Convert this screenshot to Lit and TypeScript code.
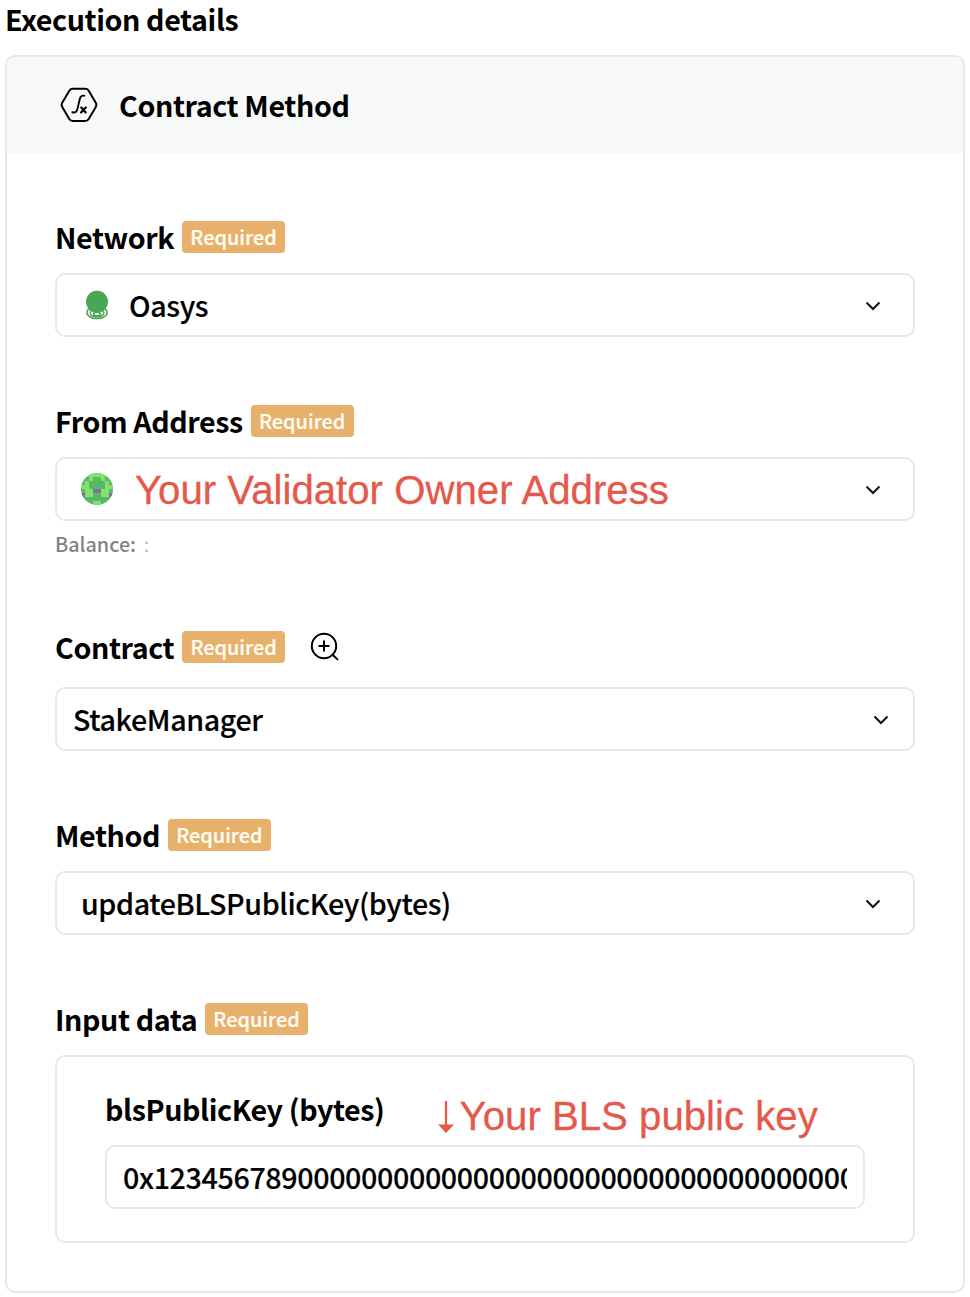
import { LitElement, html, css, svg, nothing } from "lit";
import { customElement, property } from "lit/decorators.js";

const AVATAR = [
  "..LLLL..",
  "..L..L..",
  ".L....L.",
  "LL....LL",
  ".LLPPLL.",
  "PLL..LLP",
  "........",
  "...LL...",
];

@customElement("required-badge")
class RequiredBadge extends LitElement {
  static styles = css`
    :host {
      display: block;
      box-sizing: border-box;
      width: 103px;
      height: 32px;
      border-radius: 4px;
      background: #e8b16b;
      color: #fffdf4;
      font-size: 19.9px;
      font-weight: 500;
      letter-spacing: 0;
      line-height: 31px;
      text-align: center;
      white-space: nowrap;
      -webkit-text-stroke: 0.2px #fffdf4;
    }
  `;
  render() {
    return html`Required`;
  }
}

@customElement("select-box")
class SelectBox extends LitElement {
  @property({ type: Boolean }) compact = false;
  static styles = css`
    :host {
      display: block;
    }
    .box {
      box-sizing: border-box;
      height: 64px;
      border: 2px solid #e8e8ea;
      border-radius: 10px;
      background: #fff;
      display: flex;
      align-items: center;
      justify-content: space-between;
      padding: 0 32px 0 24px;
    }
    .box.compact {
      padding: 0 24px 0 16px;
    }
    .value {
      display: flex;
      align-items: center;
      font-weight: 500;
      letter-spacing: -0.39px;
      white-space: nowrap;
      -webkit-text-stroke: 0.15px currentColor;
    }
    .chevron {
      display: block;
      margin-top: 2px;
    }
  `;
  render() {
    return html`<div class="box ${this.compact ? "compact" : ""}">
      <div class="value"><slot></slot></div>
      <svg class="chevron" width="16" height="10" viewBox="0 0 16 10" fill="none" stroke="#111" stroke-width="2">
        <path d="M1.5 1.5 8 8l6.5-6.5" />
      </svg>
    </div>`;
  }
}

@customElement("app-root")
class AppRoot extends LitElement {
  static styles = css`
    :host {
      display: block;
      box-sizing: border-box;
      height: 1297px;
      padding: 0 5px;
      background: #fff;
      color: #000;
      font-family: "Noto Sans CJK JP", "Noto Sans", sans-serif;
      font-size: 28.65px;
      line-height: 40px;
      letter-spacing: -0.4px;
    }
    svg {
      display: block;
      flex: none;
    }
    .title {
      height: 55px;
      line-height: 38px;
      font-weight: 700;
    }
    .card {
      box-sizing: border-box;
      height: 1238px;
      border: 2px solid #e8e8ea;
      border-radius: 10px;
      overflow: hidden;
    }
    .head {
      height: 96px;
      padding-left: 53px;
      background: #f7f8f8;
      display: flex;
      align-items: center;
      gap: 21px;
      font-weight: 700;
    }
    .body {
      padding: 68px 48px 0;
    }
    .field {
      margin-bottom: 68px;
    }
    .label {
      display: flex;
      align-items: center;
      gap: 7.8px;
      height: 32px;
      margin-bottom: 20px;
      font-weight: 700;
      white-space: nowrap;
    }
    .label.tall {
      margin-bottom: 24px;
    }
    .from {
      margin-bottom: 69px;
    }
    .add {
      margin-left: 17px;
    }
    .note {
      height: 41px;
      line-height: 45px;
      color: #7d8388;
      font-size: 19.8px;
      font-weight: 500;
      letter-spacing: 0;
      display: flex;
      gap: 8px;
    }
    .faint {
      font-weight: 300;
      color: #a3a7aa;
    }
    .oasys {
      margin-right: 16px;
    }
    .avatar {
      margin-right: 22px;
    }
    .red {
      color: #e4594b;
      font-family: "Liberation Sans", Arial, sans-serif;
      font-size: 40.2px;
      font-weight: 400;
      letter-spacing: 0;
      -webkit-text-stroke: 0.3px #e4594b;
    }
    .owner {
      padding-top: 4px;
    }
    .panel {
      box-sizing: border-box;
      height: 188px;
      border: 2px solid #e8e8ea;
      border-radius: 10px;
      padding: 32px 48px 0;
    }
    .param {
      display: flex;
      align-items: center;
      height: 40px;
      margin-bottom: 16px;
      font-weight: 700;
      white-space: nowrap;
    }
    .hint {
      display: flex;
      align-items: center;
      gap: 6px;
      margin-left: 53px;
      padding-top: 16px;
    }
    .input {
      display: block;
      box-sizing: border-box;
      width: 100%;
      height: 64px;
      margin: 0;
      border: 2px solid #e8e8ea;
      border-radius: 10px;
      padding: 0 16px 1px;
      background: #fff;
      color: #000;
      font-family: inherit;
      font-size: inherit;
      font-weight: 500;
      letter-spacing: -0.37px;
      outline: none;
      -webkit-text-stroke: 0.15px #000;
    }
  `;

  private label(text: string, extra: unknown = nothing, cls = "") {
    return html`<div class="label ${cls}"><span>${text}</span><required-badge></required-badge>${extra}</div>`;
  }

  render() {
    const key = "0x1234567890" + "0".repeat(40);
    return html`
      <div class="title"><span>Execution details</span></div>
      <div class="card">
        <div class="head">
          <svg width="38" height="36" viewBox="0 0 38 36" fill="none" stroke="#000" stroke-width="2" stroke-linejoin="round" stroke-linecap="round">
            <path d="M12.8 1.8H25.2Q27.5 1.8 28.7 3.7L35.5 15.2Q37.2 17.9 35.5 20.4L28.7 32Q27.5 34 25.2 34H12.8Q10.5 34 9.3 32L2.5 20.4Q.8 17.9 2.5 15.2L9.3 3.7Q10.5 1.8 12.8 1.8Z" />
            <path d="M24.3 8.7C20.5 7.9 19.9 11 19 15.2L17.8 20.6C17 24.6 15.6 26 12.3 25.3" stroke-width="1.9" />
            <path d="M21.3 20.5l4.3 4.9M25.8 20.5 21 25.4" stroke-width="2.2" />
          </svg>
          <span>Contract Method</span>
        </div>
        <div class="body">
          <div class="field">
            ${this.label("Network")}
            <select-box>
              <svg class="oasys" width="32" height="32" viewBox="0 0 32 32" fill="none" stroke="#4aa657" stroke-width="1.5">
                <ellipse cx="16" cy="23.5" rx="10.1" ry="6" />
                <ellipse cx="16" cy="23.8" rx="6.9" ry="4" />
                <ellipse cx="16" cy="25" rx="3.4" ry="1.7" />
                <circle cx="16" cy="12.8" r="11" fill="#4aa657" stroke="none" />
              </svg>
              <span>Oasys</span>
            </select-box>
          </div>
          <div class="field from">
            ${this.label("From Address")}
            <select-box>
              <svg class="avatar" width="32" height="32" viewBox="0 0 32 32">
                <defs><clipPath id="round"><circle cx="16" cy="16" r="16" /></clipPath></defs>
                <g clip-path="url(#round)" shape-rendering="crispEdges">
                  <rect width="32" height="32" fill="#55b966" />
                  ${AVATAR.flatMap((row, y) =>
                    [...row].map((c, x) =>
                      c === "."
                        ? nothing
                        : svg`<rect x=${x * 4} y=${y * 4} width="4" height="4" fill=${c === "L" ? "#7fe36c" : "#8a67a8"} />`
                    )
                  )}
                </g>
              </svg>
              <span class="red owner">Your Validator Owner Address</span>
            </select-box>
            <div class="note"><span>Balance:</span><span class="faint">:</span></div>
          </div>
          <div class="field">
            ${this.label(
              "Contract",
              html`<svg class="add" width="30" height="30" viewBox="0 0 30 30" fill="none" stroke="#000" stroke-width="2">
                <circle cx="14" cy="14" r="12.2" />
                <path d="M14 8.5v11M8.5 14h11M22.7 22.7l5.2 5.2" />
              </svg>`,
              "tall"
            )}
            <select-box compact><span>StakeManager</span></select-box>
          </div>
          <div class="field">
            ${this.label("Method")}
            <select-box><span>updateBLSPublicKey(bytes)</span></select-box>
          </div>
          <div>
            ${this.label("Input data")}
            <div class="panel">
              <div class="param">
                <span>blsPublicKey (bytes)</span>
                <div class="hint red">
                  <svg width="16" height="32" viewBox="0 0 16 32" fill="#e4594b">
                    <path d="M6.9 0h2.2v23.5h6.9L8 32 0 23.5h6.9Z" />
                  </svg>
                  <span>Your BLS public key</span>
                </div>
              </div>
              <input class="input" readonly .value=${key} />
            </div>
          </div>
        </div>
      </div>
    `;
  }
}
